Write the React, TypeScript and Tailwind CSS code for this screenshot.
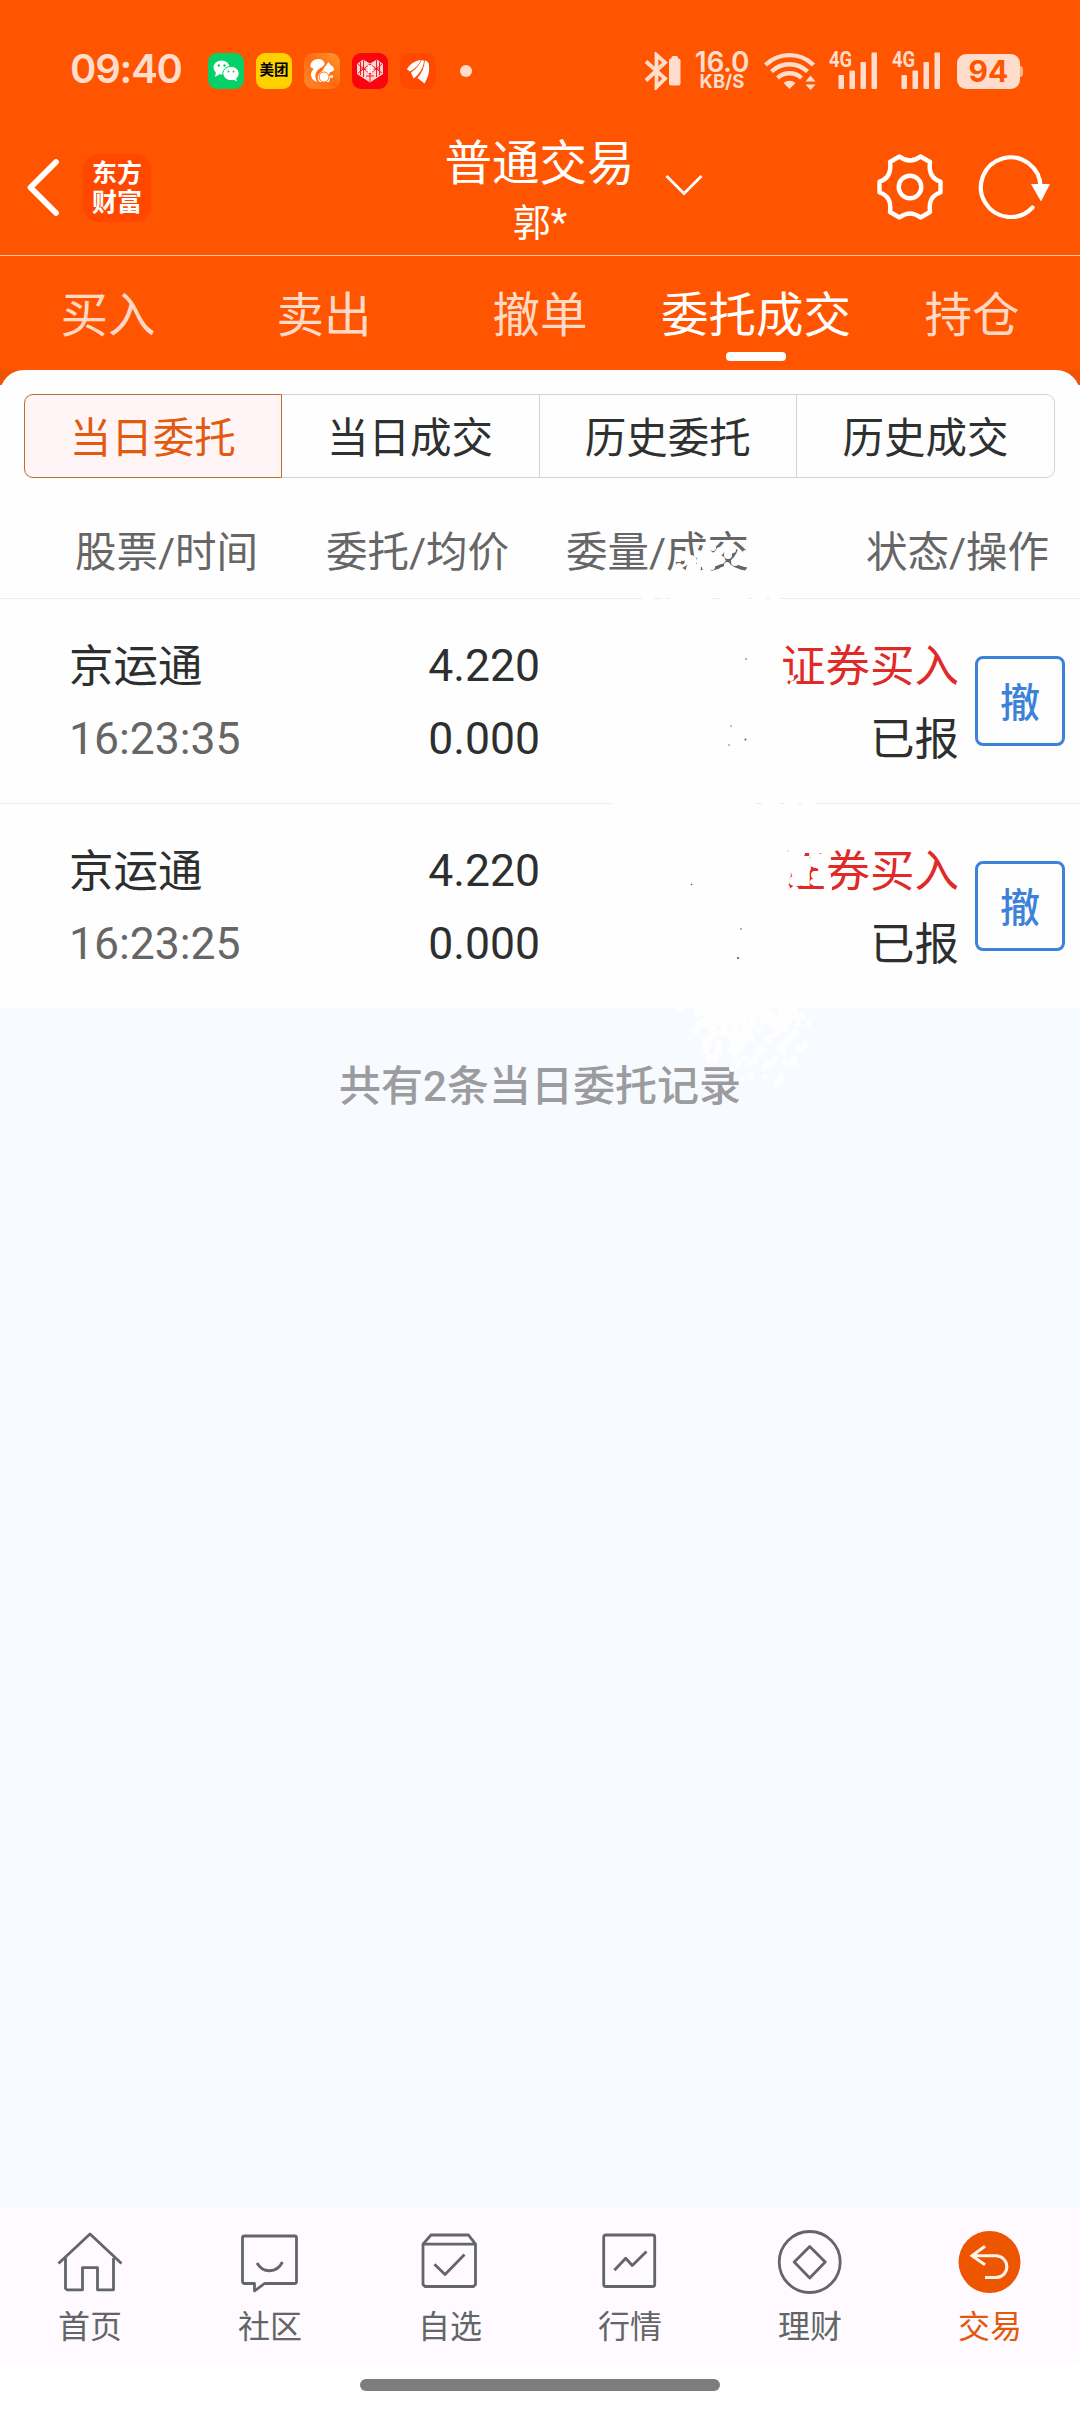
import React from "react";

type Dot = [number, number, number];

// White spray marks, in page coordinates: x, y, radius.
const SPRAY: Dot[] = [
  [683, 556, 5], [691, 561, 6], [698, 554, 4], [690, 569, 4], [702, 562, 5], [706, 567, 4], [697, 568, 4], [679, 566, 3],
  [713, 548, 3], [720, 551, 4], [726, 547, 3], [733, 550, 3], [728, 555, 4], [721, 560, 4], [714, 557, 3], [735, 562, 4], [741, 558, 3],
  [745, 552, 2], [727, 565, 3], [712, 567, 3], [722, 569, 2], [738, 571, 2], [746, 564, 3], [704, 552, 3], [716, 573, 3], [683, 572, 3],
  [782, 679, 5], [779, 669, 4], [786, 672, 2], [791, 678, 3], [784, 685, 3], [792, 683, 2], [779, 686, 3], [777, 660, 3],
  [787, 858, 7], [795, 852, 6], [803, 862, 6], [791, 866, 7], [798, 872, 7], [786, 875, 5], [806, 868, 5], [794, 881, 5], [803, 880, 6], [813, 862, 5],
  [819, 864, 5], [815, 875, 4], [822, 869, 4], [824, 880, 4], [787, 888, 3], [823, 858, 5], [813, 882, 3], [828, 888, 4], [828, 876, 3], [801, 853, 4],
  [812, 855, 3], [783, 866, 4], [817, 855, 3], [796, 889, 2.5], [825, 864, 4], [782, 882, 3],
  [681, 1009, 4], [699, 1013, 4.5], [704, 1010, 6], [711, 1012, 7], [718, 1010, 8], [727, 1011, 7], [699, 1024, 4], [696, 1031, 3.5],
  [706, 1022, 5.5], [711, 1026, 6], [718, 1019, 7], [725, 1022, 6], [715, 1033, 5], [710, 1037, 4], [707, 1043, 4.5], [706, 1050, 3.5],
  [719, 1044, 4], [718, 1051, 4], [724, 1032, 4.5], [731, 1019, 6], [738, 1013, 6], [745, 1010, 7], [752, 1012, 6], [759, 1010, 6],
  [735, 1026, 5], [742, 1021, 5], [731, 1035, 4.5], [737, 1036, 5.5], [734, 1043, 4.5], [739, 1047, 5.5], [731, 1050, 4], [736, 1054, 4],
  [749, 1026, 4.5], [753, 1021, 5], [745, 1032, 4.5], [750, 1038, 4.5], [744, 1041, 3.5], [758, 1030, 3.5], [766, 1012, 6], [764, 1019, 5],
  [776, 1024, 7.5], [772, 1018, 5], [781, 1020, 5], [784, 1028, 4], [777, 1034, 3.5], [784, 1013, 6], [791, 1011, 7], [788, 1021, 4],
  [796, 1017, 4], [802, 1016, 4], [798, 1024, 3], [808, 1024, 3], [795, 1032, 3.5], [792, 1036, 3.5], [788, 1040, 4], [785, 1044, 3.5],
  [768, 1040, 4], [770, 1037, 4], [761, 1050, 4.5], [757, 1053, 4.5], [780, 1048, 4], [783, 1051, 3.5], [799, 1049, 3.5], [805, 1045, 3.5],
  [710, 1058, 4], [715, 1058, 4], [738, 1063, 3.5], [745, 1058, 3.5], [750, 1062, 4], [755, 1060, 3.5], [765, 1067, 3], [770, 1064, 4.5],
  [775, 1060, 4], [785, 1062, 3.5], [793, 1062, 4], [794, 1059, 3.5], [732, 1069, 3], [751, 1076, 3.5], [742, 1079, 3], [765, 1077, 3],
  [777, 1083, 4], [781, 1078, 3.5],
];

const SPECKS: Dot[] = [
  [746, 659, 0.8], [731, 726, 0.7], [745.5, 739.5, 1], [729, 745, 0.7], [691.5, 884.5, 0.8], [741, 929, 0.8], [738, 958, 1.1],
];

const ERASED_RULES = [
  [642, 598, 12], [661, 598, 6], [670, 598, 42], [720, 598, 28], [752, 598, 14], [770, 598, 10],
  [611, 803, 145], [762, 803, 18], [784, 803, 14], [802, 803, 14],
];

function Spray() {
  return (
    <svg className="pointer-events-none absolute left-0 top-0" width="1080" height="1110" viewBox="0 0 1080 1110">
      <g fill="#fefefe">
        {ERASED_RULES.map(([x, y, w], i) => <rect key={i} x={x} y={y - 1} width={w} height="3" />)}
        {SPRAY.map(([x, y, r], i) => <circle key={i} cx={x} cy={y} r={r} />)}
      </g>
      <g fill="#555">{SPECKS.map(([x, y, r], i) => <circle key={i} cx={x} cy={y} r={r} />)}</g>
    </svg>
  );
}

function Signal() {
  return (
    <div className="relative h-[37px] w-[49px]">
      <span className="absolute left-0 top-0 origin-left scale-x-[0.84] font-[Roboto] text-[22px] font-bold leading-[16px]">4G</span>
      <svg width="49" height="37" viewBox="0 0 49 37" fill="currentColor">
        <rect x="9.500" y="23" width="5.500" height="14" rx="1" />
        <rect x="20.500" y="18.500" width="5.500" height="18.500" rx="1" />
        <rect x="31.500" y="10" width="5.500" height="27" rx="1" />
        <rect x="42.500" y="0.500" width="5.500" height="36.500" rx="1" />
      </svg>
    </div>
  );
}

function AppIcons() {
  return (
    <div className="ml-[25px] flex gap-3">
      <svg width="36" height="36" viewBox="0 0 36 36">
        <rect width="36" height="36" rx="9" fill="#07d068" />
        <g fill="#fff">
          <ellipse cx="13.500" cy="14.500" rx="8" ry="7" />
          <path d="M8 19l-1 5 5-3z" />
          <ellipse cx="23" cy="20.500" rx="8.200" ry="7.200" stroke="#07d068" strokeWidth="1" />
          <path d="M25 26.500l4 2-1-4z" />
        </g>
        <g fill="#07d068">
          <circle cx="10.800" cy="12.500" r="1.200" /><circle cx="16.500" cy="12.500" r="1.200" />
          <circle cx="20.500" cy="18.500" r="1" /><circle cx="25.500" cy="18.500" r="1" />
        </g>
      </svg>
      <div className="flex h-9 w-9 items-center justify-center rounded-[9px] bg-[#ffd100] pt-px text-[14.500px] font-bold leading-none text-black">美团</div>
      <svg width="36" height="36" viewBox="0 0 36 36">
        <defs>
          <linearGradient id="squirrel" x1="1" y1="0" x2="0" y2="1">
            <stop offset="0" stopColor="#ff9a2e" /><stop offset="0.500" stopColor="#ff6a10" /><stop offset="1" stopColor="#ff8a2a" />
          </linearGradient>
        </defs>
        <rect width="36" height="36" rx="9" fill="url(#squirrel)" />
        <path fill="#fff" d="M6.500 14C6 9 10 6 14 6c3.500 0 6.500 2 6.500 4.500 0 3-4 4-6.500 6.500-3 3-3.500 7-1 12C8 27.500 6 23 7.500 19l2-3z" />
        <path fill="#fff" d="M20 15l4.500-6 2 3c2 1 3.500 2.500 3.500 4.500s-2 2-4 2.500l-1 3c2 2 1 5 0 7h-9c-3-2-3-6-.500-8.500C17 18.500 19 18 20 15z" />
        <circle cx="20" cy="24" r="5" fill="#fff" stroke="#ff7a1c" strokeWidth="1" />
        <circle cx="27.500" cy="23.500" r="1.600" fill="#fff" />
      </svg>
      <svg width="36" height="36" viewBox="0 0 36 36">
        <rect width="36" height="36" rx="9" fill="#fa0410" />
        <path d="M18 29.500L5 21V11l6-4.500L18 10.500l7-4L31 11v10z" fill="#ffd6d6" />
        <path d="M6 11l12 10 12-10M6 20l12-9 12 9M11.500 7v17M24.500 7v17M18 20v9M8.500 9v13M27.500 9v13M8 16h6M22 16h6M14 23h8" fill="none" stroke="#fa0410" strokeWidth="0.900" />
        <path d="M16.500 12v8M19.500 12v8M14.500 14.500h7M14.500 17.500h7" stroke="#fff" strokeWidth="1.200" />
      </svg>
      <svg width="36" height="36" viewBox="0 0 36 36">
        <rect width="36" height="36" rx="9" fill="#ff4800" />
        <g fill="#fff">
          <path d="M7 16.500c2-5 8-9 14-9.500-2 4.500-5.500 8.500-11 11.500z" />
          <path d="M21.500 7.500c1.500-.500 2.500 0 2.500 1-1 7-5 13-10.500 17l-2.500-6c4.500-3 8-7 10.500-12z" />
          <path d="M24.800 7.500c1.500 0 3.500 1.500 4 3C30 18 28 25 24.500 30.500L17.500 25c4.500-5 7-11 7.300-17.500z" />
        </g>
      </svg>
    </div>
  );
}

function StatusBar() {
  return (
    <div className="flex h-[142px] items-center pl-[70px] text-[#ffdccb]">
      <span className="-mt-1 w-[113px] whitespace-nowrap font-[Inter] text-[40px] font-semibold leading-none tracking-[-1.2px]">09:40</span>
      <AppIcons />
      <span className="ml-6 h-3 w-3 rounded-full bg-current" />
      <svg className="ml-[171px]" width="40" height="38" viewBox="0 0 40 38" fill="none" stroke="currentColor" strokeWidth="3.800">
        <path d="M2 9.500l19 17-8.500 8.500V3L21 10.500 2 28.500" transform="translate(1 0)" />
        <rect x="26" y="6.500" width="11.500" height="27" rx="2" fill="currentColor" stroke="none" />
        <rect x="28.500" y="4" width="6.500" height="4" rx="1.500" fill="currentColor" stroke="none" />
      </svg>
      <div className="-mt-[3px] ml-[11px] flex w-[56px] flex-col items-center font-[Inter] font-semibold">
        <span className="text-[28px] leading-[22px] tracking-[-0.3px]">16.0</span>
        <span className="mt-px text-[18.500px] font-bold leading-[15px]">KB/S</span>
      </div>
      <svg className="ml-[14px]" width="54" height="38" viewBox="0 0 54 38" fill="none" stroke="currentColor" strokeWidth="4.300">
        <path d="M1.500 13a34 34 0 0 1 48 0M7.500 19.500a26 26 0 0 1 36 0M13.500 26a17.500 17.500 0 0 1 24 0" />
        <path d="M19.500 31a9.500 9.500 0 0 1 12 0L25.500 37z" fill="currentColor" stroke="none" />
        <path d="M41.500 29.500l5-6 5 6zM41.500 32.500l5 5.500 5-5.500z" fill="currentColor" stroke="none" />
      </svg>
      <div className="-mt-[2px] ml-[11px] flex gap-[14px]">
        <Signal />
        <Signal />
      </div>
      <div className="ml-[16px] flex h-[35px] w-[63px] items-center justify-center rounded-[9px] bg-current">
        <span className="font-[Inter] text-[30px] font-bold leading-none text-[#ff5500]">94</span>
      </div>
      <span className="h-[11px] w-[3px] rounded-r-sm bg-[#ffb08a]" />
    </div>
  );
}

function TitleBar() {
  return (
    <div className="relative flex h-[113px] items-start text-white">
      <svg className="ml-[25px] mt-[16px]" width="36" height="58" viewBox="0 0 36 58" fill="none" stroke="currentColor" strokeWidth="5.800" strokeLinecap="round" strokeLinejoin="round">
        <path d="M31 4L5.500 29.500 31 55" />
      </svg>
      <div className="ml-[22px] mt-[12px] flex h-[68px] w-[68px] flex-col items-center justify-center rounded-[15px] bg-[#ff4700] text-[25px] font-bold leading-[29px]">
        <span>东方</span>
        <span>财富</span>
      </div>
      <div className="absolute left-1/2 top-0 flex -translate-x-1/2 flex-col items-center">
        <span className="-mt-[6px] whitespace-nowrap pr-px text-[47.500px] leading-[56px]">普通交易</span>
        <span className="mt-[8px] whitespace-nowrap text-[38px] leading-[46px]">郭*</span>
      </div>
      <svg className="ml-[514px] mt-[32px]" width="38" height="22" viewBox="0 0 38 22" fill="none" stroke="currentColor" strokeWidth="2.800">
        <path d="M1.500 2L19 19.500 36.500 2" />
      </svg>
      <svg className="ml-[172px] mt-[10px]" width="70" height="70" viewBox="-35 -35 70 70" fill="none" stroke="currentColor" strokeWidth="4.400" strokeLinejoin="round">
        <circle r="11.300" cy="0" />
        <path d="M-10.500 -30.500 Q0 -22.500 10.500 -30.500 L20 -25 C18.500 -14 22 -8 30.500 -5.500 V5.500 C22 8 18.500 14 20 25 L10.500 30.500 Q0 22.500 -10.500 30.500 L-20 25 C-18.500 14 -22 8 -30.500 5.500 V-5.500 C-22 -8 -18.500 -14 -20 -25 Z" />
      </svg>
      <svg className="ml-[31px] mt-[10px]" width="74" height="70" viewBox="-35 -35 74 70" fill="none" stroke="currentColor" strokeWidth="4.200">
        <path d="M29.500 0A29.800 29.800 0 1 0 21.500 20.500" strokeLinecap="round" />
        <path d="M20 -3h19L30 14.500z" fill="currentColor" stroke="none" />
      </svg>
    </div>
  );
}

function Tabs() {
  const tabs = ["买入", "卖出", "撤单", "委托成交", "持仓"];
  return (
    <div className="grid h-[115px] grid-cols-5 border-t border-[#ffc6a8]">
      {tabs.map((t) => (
        <div key={t} className={`flex flex-col items-center pt-[30px] text-[47.500px] leading-[60px] ${t === "委托成交" ? "text-white" : "text-[#ffd9c5]"}`}>
          <span className="whitespace-nowrap">{t}</span>
          {t === "委托成交" && <span className="mt-[6px] h-[9px] w-[60px] rounded-[4px] bg-white" />}
        </div>
      ))}
    </div>
  );
}

function Segments() {
  return (
    <div className="mx-6 flex h-[84px] pr-px text-center text-[41.500px] leading-[87px] text-[#2f3030]">
      <div className="w-[258px] rounded-l-[9px] border border-[#c4682f] bg-[#fff5f6] text-[#e15a10]">当日委托</div>
      <div className="w-[258px] border border-l-0 border-[#d4d4d8]">当日成交</div>
      <div className="w-[258px] border border-l-0 border-[#d4d4d8]">历史委托</div>
      <div className="w-[258px] rounded-r-[9px] border border-l-0 border-[#d4d4d8]">历史成交</div>
    </div>
  );
}

function OrderRow({ time, last }: { time: string; last?: boolean }) {
  return (
    <div className={`flex pl-[69px] pr-[15px] pt-[31px] text-[44.500px] leading-[73px] text-[#2d2e2e] ${last ? "h-[204px]" : "h-[205px] border-b border-[#ebebeb]"}`}>
      <div className="w-[241px]">
        <div className="pt-px">京运通</div>
        <div className="-mt-px text-[#666]">{time}</div>
      </div>
      <div className="w-[230px] text-right">
        <div>4.220</div>
        <div>0.000</div>
      </div>
      <div className="flex-1 pr-[16px] pt-px text-right">
        <div className="text-[#df2a28]">证券买入</div>
        <div>已报</div>
      </div>
      <button className="mt-[26px] h-[90px] w-[90px] rounded-[8px] border-[3px] border-[#3b82d8] pt-[3px] text-[40px] font-medium leading-[84px] text-[#3b82d8]">撤</button>
    </div>
  );
}

const NAV = [
  { label: "首页", d: "M4.500 37.500L36 8l31.500 29.500M11.500 32v30.500l1.500 1.300h15.500V41.700H43.500v22.100h16V32" },
  { label: "社区", d: "M10.500 10h50a2 2 0 0 1 2 2v43.500a2 2 0 0 1-2 2h-30l-10 7.500v-7.500h-10a2 2 0 0 1-2-2V12a2 2 0 0 1 2-2zM23 37c6 10.500 19.500 10.500 25.500-1" },
  { label: "自选", d: "M9 18.200L17 9h37.500l7 9.200zM9 18.200V58.500l2 2h48.500l2-2V18.200M20.500 38.200L31 48.500l19.500-20" },
  { label: "行情", d: "M11.700 9h47a2 2 0 0 1 2 2V58.500a2 2 0 0 1-2 2h-47a2 2 0 0 1-2-2V11a2 2 0 0 1 2-2zM20.400 44.200l11.300-12 6.600 7.300L52.500 25.500" },
  { label: "理财", d: "M5.200 36a30.500 30.500 0 1 1 61 0a30.500 30.500 0 1 1-61 0zM35.700 20.500l15.500 15.500L35.700 52 20.200 36z" },
];

function BottomNav() {
  return (
    <div className="grid h-[156px] grid-cols-6 bg-[#fefaff] pt-[18px] text-[32px] leading-[40px] text-[#626664]">
      {NAV.map((n) => (
        <div key={n.label} className="flex flex-col items-center">
          <svg width="72" height="72" viewBox="0 0 72 72" fill="none" stroke="currentColor" strokeWidth="2.800" strokeLinejoin="round">
            <path d={n.d} />
          </svg>
          <span className="mt-[9px]">{n.label}</span>
        </div>
      ))}
      <div className="flex flex-col items-center text-[#e2580c]">
        <svg width="72" height="72" viewBox="0 0 72 72" fill="none" stroke="#fff3ea" strokeWidth="3">
          <circle cx="35.500" cy="36" r="31" fill="#ee5500" stroke="none" />
          <path d="M31 20.200L18 29.800l13 9M18 29.800h24a10.800 10.800 0 0 1 0 21.700H31" />
        </svg>
        <span className="mt-[9px]">交易</span>
      </div>
    </div>
  );
}

export default function App() {
  return (
    <div className="relative flex h-[2412px] w-[1080px] flex-col overflow-hidden bg-[#f7faff] font-[Roboto,'Noto_Sans_CJK_SC',sans-serif]">
      <header className="bg-[#ff5500]">
        <StatusBar />
        <TitleBar />
        <Tabs />
      </header>
      <main className="flex flex-1 flex-col">
        <div className="bg-[linear-gradient(#ee5405_15px,#fefefe_15px)]">
          <div className="rounded-t-[24px] bg-[#fefefe] pt-6">
            <Segments />
            <div className="flex h-[121px] border-b border-[#ebebeb] pl-[75px] pt-[45px] text-[41.500px] leading-[60px] text-[#666]">
              <span className="w-[251px]">股票/时间</span>
              <span className="w-[240px]">委托/均价</span>
              <span className="w-[300px]">委量/成交</span>
              <span>状态/操作</span>
            </div>
            <OrderRow time="16:23:35" />
            <OrderRow time="16:23:25" last />
          </div>
        </div>
        <p className="mt-[49px] text-center text-[42px] font-medium leading-[60px] text-[#9c9b9d]">共有2条当日委托记录</p>
      </main>
      <BottomNav />
      <div className="flex h-[48px] justify-center bg-white pt-[15px]">
        <span className="h-[12px] w-[360px] rounded-full bg-[#7c7e7b]" />
      </div>
      <Spray />
    </div>
  );
}
